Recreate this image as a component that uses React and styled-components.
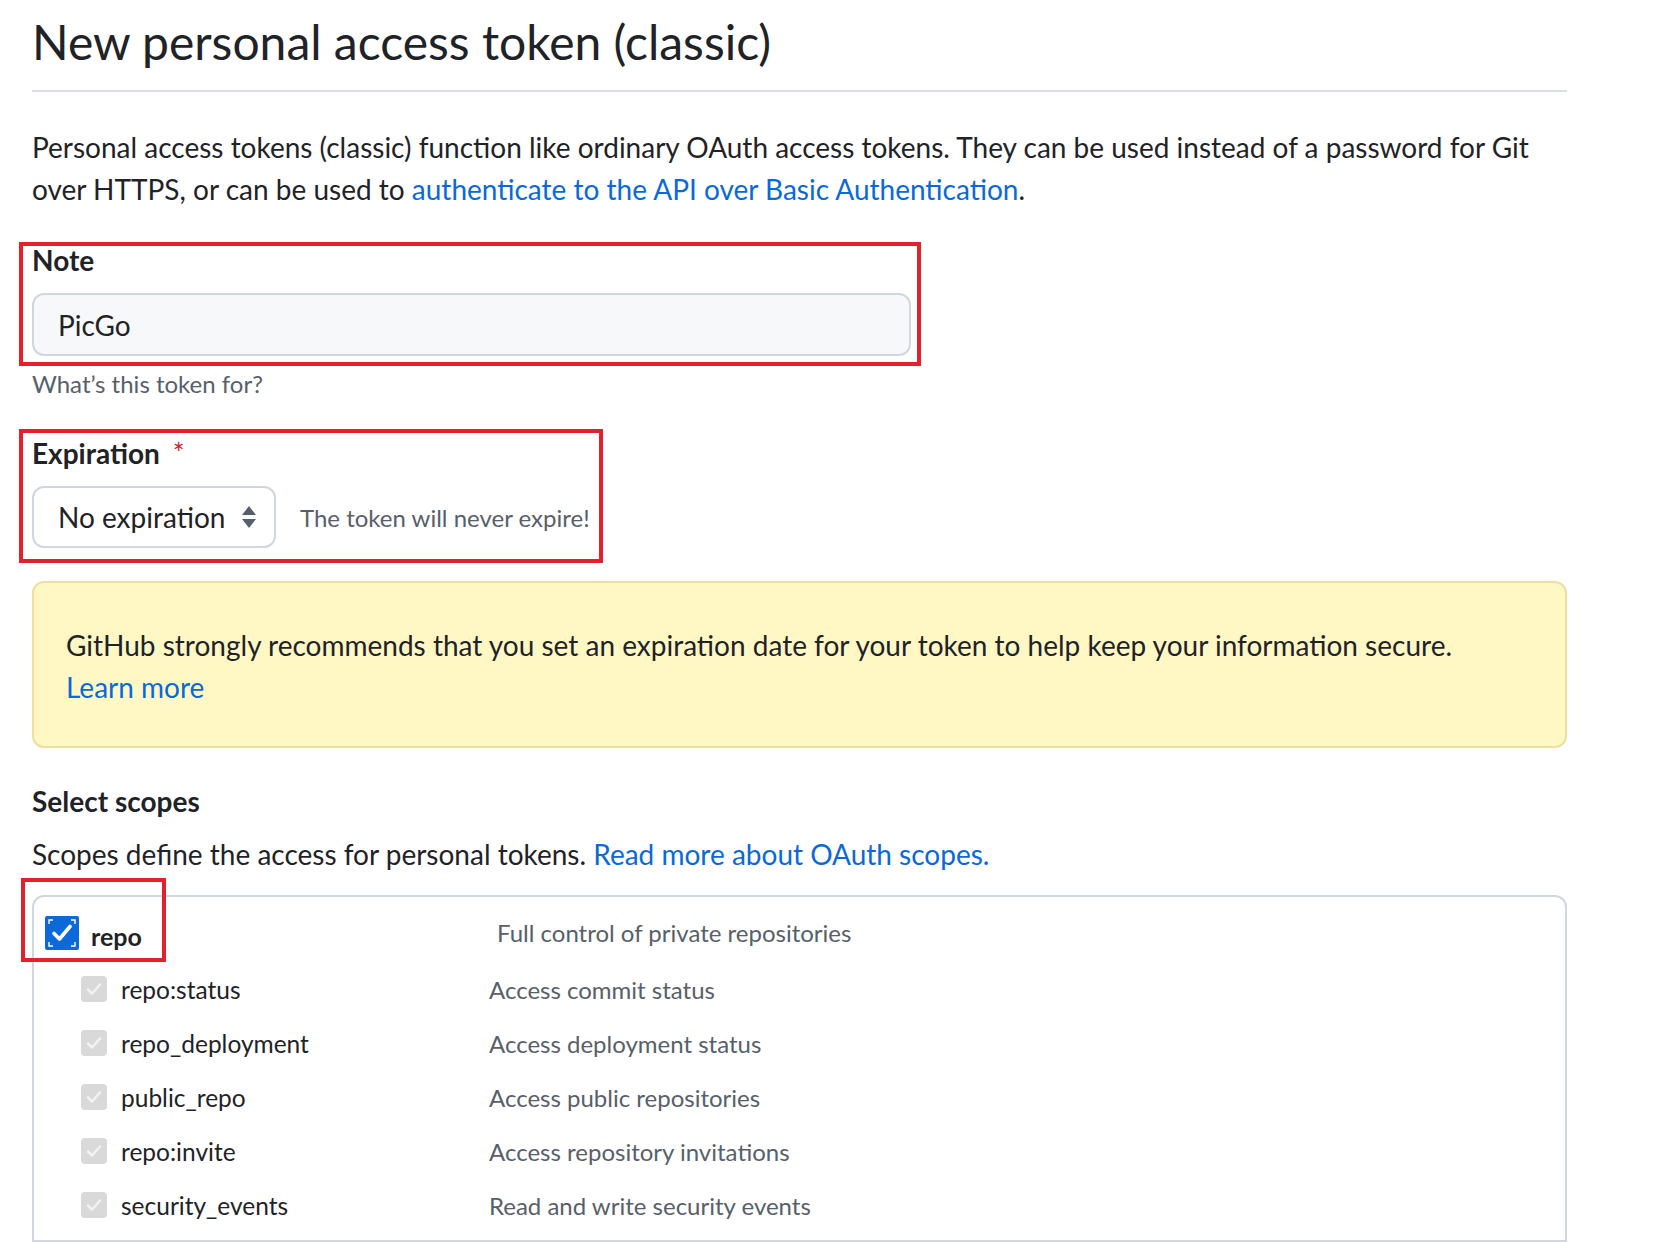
import React from 'react';
import styled, { createGlobalStyle } from 'styled-components';

const GlobalStyle = createGlobalStyle`
  html, body {
    margin: 0;
    padding: 0;
    background: #ffffff;
  }
  body {
    font-family: Lato, "Liberation Sans", sans-serif;
    color: #1f2328;
  }
`;

const scopes = [
  { name: 'repo:status', desc: 'Access commit status' },
  { name: 'repo_deployment', desc: 'Access deployment status' },
  { name: 'public_repo', desc: 'Access public repositories' },
  { name: 'repo:invite', desc: 'Access repository invitations' },
  { name: 'security_events', desc: 'Read and write security events' },
];

const App = () => {
  return (
    <>
      <GlobalStyle />
      <Page>
        <Subhead>New personal access token (classic)</Subhead>
        <Intro>
          Personal access tokens (classic) function like ordinary OAuth access tokens. They can be used instead of a password for Git
          <br />
          over HTTPS, or can be used to <Link>authenticate to the API over Basic Authentication</Link>.
        </Intro>

        <Highlight $width={902} $top={32} $pad="0 6px 6px 9px">
          <Label>Note</Label>
          <TextInput defaultValue="PicGo" />
        </Highlight>
        <Hint>What’s this token for?</Hint>

        <Highlight $width={584} $top={27} $pad="6px 6px 11px 9px">
          <Label>Expiration <Required>*</Required></Label>
          <ExpiryRow>
            <Select>
              No expiration
              <SelectArrows />
            </Select>
            <SmallNote>The token will never expire!</SmallNote>
          </ExpiryRow>
        </Highlight>

        <Flash>
          GitHub strongly recommends that you set an expiration date for your token to help keep your information secure.
          <br />
          <Link>Learn more</Link>
        </Flash>

        <SectionTitle>Select scopes</SectionTitle>
        <SectionText>
          Scopes define the access for personal tokens. <Link>Read more about OAuth scopes.</Link>
        </SectionText>

        <ScopeBox>
          <ParentRow>
            <ScopeName>
              <Annotation />
              <BlueCheck />
              <strong>repo</strong>
            </ScopeName>
            <ScopeDesc>Full control of private repositories</ScopeDesc>
          </ParentRow>
          {scopes.map(s => (
            <ChildRow key={s.name}>
              <ScopeName>
                <GrayCheck />
                <span>{s.name}</span>
              </ScopeName>
              <ScopeDesc>{s.desc}</ScopeDesc>
            </ChildRow>
          ))}
        </ScopeBox>
      </Page>
    </>
  );
};

export default App;

const SelectArrows = () => (
  <ArrowSvg width="16" height="24" viewBox="0 0 16 24">
    <path d="M8 1 L15 10 L1 10 Z" fill="#57606a" />
    <path d="M1 14 L15 14 L8 23 Z" fill="#57606a" />
  </ArrowSvg>
);

const BlueCheck = () => (
  <svg width="34" height="34" viewBox="0 0 34 34">
    <rect x="0" y="0" width="34" height="34" rx="2" fill="#0b69d9" />
    <path d="M9 17.5 L14.5 23 L25 10.5" stroke="#fff" strokeWidth="3.6" fill="none" strokeLinecap="round" strokeLinejoin="round" />
    <path d="M4 8 V4 H8 M26 4 H30 V8 M30 26 V30 H26 M8 30 H4 V26" stroke="#fff" strokeWidth="1.4" fill="none" />
  </svg>
);

const GrayCheck = () => (
  <svg width="26" height="26" viewBox="0 0 26 26">
    <rect x="0" y="0" width="26" height="26" rx="4" fill="#d9d9d9" />
    <path d="M7 13.5 L11 17.5 L19 8.5" stroke="#f2f2f2" strokeWidth="2.6" fill="none" strokeLinecap="round" strokeLinejoin="round" />
  </svg>
);

const Page = styled.div`
  width: 1535px;
  padding: 0 0 0 32px;
`;

const Subhead = styled.h1`
  margin: 6px 0 0;
  padding-bottom: 12px;
  border-bottom: 2px solid #d8dee4;
  font-size: 48px;
  line-height: 72px;
  font-weight: 400;
  color: #1f2328;
`;

const Intro = styled.p`
  margin: 34px 0 0;
  font-size: 28px;
  line-height: 42px;
  white-space: nowrap;
`;

const Link = styled.a`
  color: #0969da;
  text-decoration: none;
  cursor: pointer;
`;

const Highlight = styled.div`
  box-sizing: border-box;
  width: ${p => p.$width}px;
  margin: ${p => p.$top}px 0 0 -13px;
  padding: ${p => p.$pad};
  border: 4px solid #e3202b;
`;

const Label = styled.div`
  font-size: 28px;
  line-height: 28px;
  font-weight: 700;
`;

const Required = styled.span`
  color: #cf222e;
  font-weight: 400;
  margin-left: 6px;
`;

const TextInput = styled.input`
  box-sizing: border-box;
  display: block;
  width: 879px;
  height: 63px;
  margin-top: 19px;
  padding: 0 24px;
  font-family: inherit;
  font-size: 28px;
  color: #1f2328;
  background: #f6f8fa;
  border: 2px solid #d0d7de;
  border-radius: 12px;
  outline: none;
`;

const Hint = styled.div`
  margin-top: 0;
  font-size: 24px;
  line-height: 36px;
  color: #57606a;
`;

const ExpiryRow = styled.div`
  display: flex;
  align-items: center;
  gap: 24px;
  margin-top: 19px;
`;

const Select = styled.div`
  box-sizing: border-box;
  display: flex;
  align-items: center;
  justify-content: space-between;
  width: 244px;
  height: 62px;
  padding: 0 17px 0 24px;
  font-size: 28px;
  background: #fff;
  border: 2px solid #d0d7de;
  border-radius: 12px;
`;

const ArrowSvg = styled.svg`
  flex: none;
`;

const SmallNote = styled.span`
  font-size: 24px;
  color: #57606a;
`;

const Flash = styled.div`
  box-sizing: border-box;
  margin-top: 18px;
  height: 167px;
  padding: 41px 32px 0;
  font-size: 28px;
  line-height: 42px;
  background: #fff8c5;
  border: 2px solid #efdf9e;
  border-radius: 12px;
`;

const SectionTitle = styled.h2`
  margin: 32px 0 0;
  font-size: 28px;
  line-height: 42px;
  font-weight: 700;
`;

const SectionText = styled.p`
  margin: 11px 0 0;
  font-size: 28px;
  line-height: 42px;
`;

const ScopeBox = styled.div`
  box-sizing: border-box;
  margin-top: 20px;
  height: 348px;
  padding: 0 0 0 11px;
  border: 2px solid #d0d7de;
  border-bottom-width: 3px;
  border-radius: 12px 12px 0 0;
`;

const ParentRow = styled.div`
  display: grid;
  grid-template-columns: 452px 1fr;
  align-items: center;
  height: 65px;
  padding-top: 6px;
  box-sizing: border-box;
`;

const ChildRow = styled.div`
  display: grid;
  grid-template-columns: 408px 1fr;
  align-items: center;
  height: 54px;
  margin-left: 36px;
`;

const ScopeName = styled.div`
  position: relative;
  display: flex;
  align-items: center;
  gap: 14px;
  font-size: 24.5px;
  color: #1f2328;
  strong {
    font-size: 25px;
    font-weight: 700;
    margin-left: -2px;
    padding-top: 6px;
  }
`;

const Annotation = styled.div`
  position: absolute;
  left: -24px;
  top: -37px;
  width: 145px;
  height: 84px;
  box-sizing: border-box;
  border: 4px solid #e3202b;
`;

const ScopeDesc = styled.div`
  font-size: 24px;
  color: #57606a;
`;
